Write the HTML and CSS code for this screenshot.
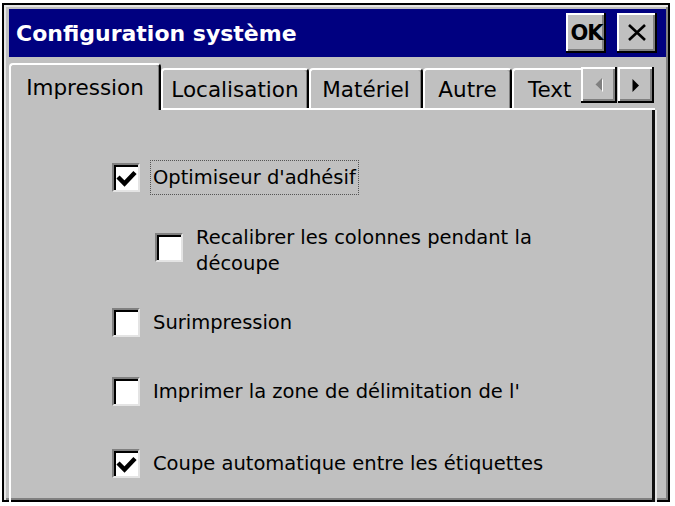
FILE: index.html
```html
<!DOCTYPE html>
<html lang="fr">
<head>
<meta charset="utf-8">
<title>Configuration système</title>
<link rel="stylesheet" href="styles.css">
</head>
<body>
<div class="dialog">
  <div class="titlebar">
    <span class="title">Configuration système</span>
    <div class="tb-buttons">
      <button class="raised tbtn ok">OK</button>
      <button class="raised tbtn close" aria-label="Fermer">
        <svg width="18" height="17" viewBox="0 0 18 17"><path d="M1 1 L17 16 M17 1 L1 16" stroke="#000" stroke-width="2.6" fill="none"/></svg>
      </button>
    </div>
  </div>
  <div class="tabstrip">
    <div class="tab selected w-imp">Impression</div>
    <div class="tab w-loc">Localisation</div>
    <div class="tab w-mat">Matériel</div>
    <div class="tab w-aut">Autre</div>
    <div class="tab cut">Text</div>
    <div class="scroller">
      <button class="raised sbtn" aria-label="Précédent">
        <svg width="9" height="14" viewBox="0 0 9 14"><polygon points="8,1 1.5,7.5 8,14" fill="#fff"/><polygon points="7,0 0.5,6.5 7,13" fill="#808080"/></svg>
      </button>
      <button class="raised sbtn" aria-label="Suivant">
        <svg width="8" height="13" viewBox="0 0 8 13"><polygon points="0.5,0 7,6.5 0.5,13" fill="#000"/></svg>
      </button>
    </div>
  </div>
  <div class="panel">
    <div class="opt">
      <span class="box"><svg class="chk" width="24" height="25" viewBox="0 0 24 25"><polyline points="4,12 10.5,18.5 21,7.5" fill="none" stroke="#000" stroke-width="4.5"/></svg></span>
      <span class="lbl focus">Optimiseur d'adhésif</span>
    </div>
    <div class="opt sub">
      <span class="box"></span>
      <span class="lbl multi">Recalibrer les colonnes pendant la<br>découpe</span>
    </div>
    <div class="opt">
      <span class="box"></span>
      <span class="lbl">Surimpression</span>
    </div>
    <div class="opt">
      <span class="box"></span>
      <span class="lbl">Imprimer la zone de délimitation de l'</span>
    </div>
    <div class="opt">
      <span class="box"><svg class="chk" width="24" height="25" viewBox="0 0 24 25"><polyline points="4,12 10.5,18.5 21,7.5" fill="none" stroke="#000" stroke-width="4.5"/></svg></span>
      <span class="lbl">Coupe automatique entre les étiquettes</span>
    </div>
  </div>
</div>
</body>
</html>
```

FILE: styles.css
```css
* { box-sizing: border-box; }
html, body { margin: 0; padding: 0; background: #fff; }
body {
  width: 675px;
  height: 506px;
  overflow: hidden;
  font-family: "DejaVu Sans", "Liberation Sans", sans-serif;
  color: #000;
}

.dialog {
  margin: 3px 0 0 2px;
  width: 668px;
  height: 499px;
  border: 2px solid #000;
  background: #c0c0c0;
  box-shadow: inset 2px 2px 0 #e6e6e6, inset -2px -2px 0 #808080;
  padding: 4px 2px 2px 5px;
  display: flex;
  flex-direction: column;
}

/* title bar */
.titlebar {
  flex: none;
  height: 48px;
  background: #000080;
  display: flex;
  align-items: center;
  justify-content: space-between;
  padding: 0 9px 0 7px;
}
.title {
  color: #fff;
  font-weight: bold;
  font-size: 22px;
}
.tb-buttons { display: flex; gap: 11px; }

.raised {
  background: #c0c0c0;
  border: 0;
  padding: 0;
  margin: 0;
  font-family: inherit;
  display: flex;
  align-items: center;
  justify-content: center;
  box-shadow: inset -2px -2px 0 #000, inset 2px 2px 0 #fff, inset -4px -4px 0 #808080;
}
.tbtn { width: 40px; height: 40px; }
.ok {
  font-weight: bold;
  font-size: 21px;
  letter-spacing: -1px;
  padding-left: 1px;
  color: #000;
}
.close svg { display: block; margin-top: -1px; }

/* tabs */
.tabstrip {
  flex: none;
  height: 53px;
  margin-right: 11px;
  display: flex;
  align-items: flex-end;
  border-bottom: 2px solid #fff;
}
.tab {
  flex: none;
  height: 40px;
  border-top: 2px solid #fff;
  border-left: 2px solid #fff;
  border-right: 2px solid #000;
  border-radius: 4px 4px 0 0;
  box-shadow: inset -1px 0 0 #808080;
  font-size: 21.5px;
  display: flex;
  align-items: center;
  justify-content: center;
  white-space: nowrap;
}
.tab.selected {
  height: 47px;
  margin-bottom: -2px;
  position: relative;
  z-index: 1;
  background: #c0c0c0;
}
.w-imp { width: 152px; }
.w-loc { width: 148px; }
.w-mat { width: 114px; }
.w-aut { width: 89px; }
.tab.cut {
  width: 69px;
  border-right: 0;
  border-top-right-radius: 0;
  box-shadow: none;
  overflow: hidden;
  justify-content: flex-start;
  padding-left: 14px;
}

.scroller {
  flex: none;
  align-self: flex-start;
  margin-top: 10px;
  display: flex;
  gap: 1px;
  padding-right: 1px;
}
.sbtn { width: 36px; height: 36px; }
.sbtn svg { display: block; }

/* page */
.panel {
  flex: 1;
  margin-right: 11px;
  border-left: 2px solid #fff;
  border-right: 3px solid #111;
  box-shadow: 2px 0 0 #e4e4e4;
  display: grid;
  grid-template-rows: 74px 73px 71px 66px 78px;
  align-items: center;
  justify-items: start;
  padding: 30px 0 0 101px;
}

.opt {
  display: flex;
  align-items: center;
  gap: 10px;
  font-size: 19.5px;
}
.opt.sub { margin-left: 43px; }
.opt.sub .box { margin-bottom: 6px; }

.box {
  flex: none;
  width: 28px;
  height: 29px;
  background: #fff;
  border-top: 2px solid #808080;
  border-left: 2px solid #808080;
  border-right: 2px solid #e4e4e4;
  border-bottom: 2px solid #e4e4e4;
  box-shadow: inset 2px 2px 0 #000;
}
.chk { display: block; }

.lbl {
  border: 1px solid transparent;
  padding: 2px 2px;
  line-height: 29px;
  white-space: nowrap;
}
.lbl.focus { border: 1px dotted #555; }
.lbl.multi { line-height: 26px; }
```
